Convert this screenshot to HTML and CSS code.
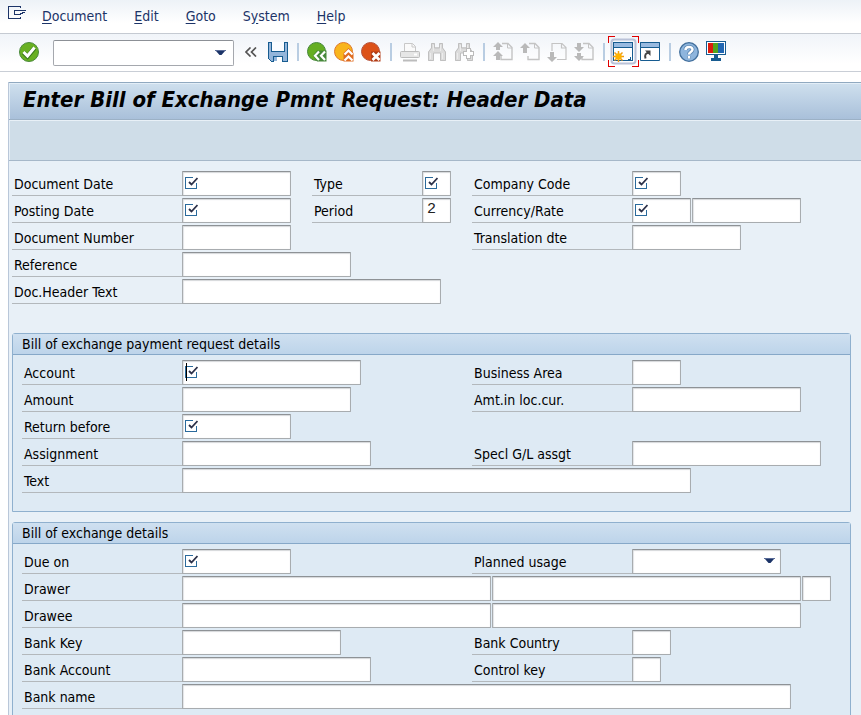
FILE: index.html
```html
<!DOCTYPE html>
<html lang="en">
<head>
<meta charset="utf-8">
<title>Enter Bill of Exchange Pmnt Request: Header Data</title>
<link rel="stylesheet" href="styles.css">
</head>
<body>
<svg class="sprite" aria-hidden="true">
  <symbol id="required" viewBox="0 0 13 12">
    <path d="M8 .5H.5v11h11V6" fill="none" stroke="#2a6a9c" shape-rendering="crispEdges"/>
    <path d="M4 5l2.500 2.500L12.500 1" fill="none" stroke="#2c3048" stroke-width="1.800"/>
  </symbol>
  <symbol id="arrow" viewBox="0 0 11 6">
    <path d="M0 .5h11" stroke="#5a6c98"/><path d="M1 1h9L6.500 5h-2z" fill="#1c3468"/>
  </symbol>
  <symbol id="page" viewBox="0 0 20 20">
    <path d="M9 1.500h6l4 4v12H8V14" fill="none" stroke="#c4c4c4" stroke-width="1.400"/>
    <path d="M14.500 1v5H19" fill="none" stroke="#c4c4c4"/>
  </symbol>
  <symbol id="binoculars" viewBox="0 0 20 20">
    <path d="M4 1h4v4h4V1h4v5l3 4v9h-6v-8H7v8H1v-9l3-4z" fill="#dcdcdc"/>
    <path d="M4.500 1.500h3V6h5V1.500h3V6l3 4v8.500h-5V11h-7v7.500h-5V10l3-4z" fill="none" stroke="#c0c0c0"/>
    <path d="M3.500 11v6M15.500 11v6M6.500 3v6M13.500 3v6" stroke="#ececec"/>
  </symbol>
</svg>

<nav class="menu">
  <button class="menu-icon" aria-label="Window menu">
    <svg width="18" height="13" viewBox="0 0 18 13" shape-rendering="crispEdges"><path d="M12.500 2V.5H.5v12h12V11M17.500 4.500H6.500v4h6v-1h2v-1h2v-1" fill="none" stroke="#1c3468"/></svg>
  </button>
  <a href="#"><u>D</u>ocument</a>
  <a href="#"><u>E</u>dit</a>
  <a href="#"><u>G</u>oto</a>
  <a href="#">S<u>y</u>stem</a>
  <a href="#"><u>H</u>elp</a>
</nav>

<header class="toolbar">
  <button class="tool enter" aria-label="Enter"><svg viewBox="0 0 20 20"><circle cx="10" cy="10" r="9.500" fill="#69b022" stroke="#4b8a3d"/><path d="M4.500 10.500l4 4L15.500 6" fill="none" stroke="#39781c" stroke-width="4.500"/><path d="M4.500 10l4 4L15.500 5.500" fill="none" stroke="#fff" stroke-width="3"/></svg></button>
  <div class="command">
    <input type="text" aria-label="Command">
    <button aria-label="Command history"><svg width="11" height="6"><use href="#arrow"/></svg></button>
  </div>
  <button class="collapse" aria-label="Collapse"><svg width="12" height="10" viewBox="0 0 12 10"><path d="M5.500 .5L1 5l4.500 4.500M11 .5L6.500 5 11 9.500" fill="none" stroke="#555" stroke-width="1.700"/></svg></button>
  <div class="tools">
    <button class="tool" aria-label="Save"><svg viewBox="0 0 20 20" shape-rendering="crispEdges"><path d="M.5 .5h19v19h-16l-3-3z" fill="#94b5da" stroke="#175c90"/><path d="M3.500 0v9.500h13V0" fill="#fafcff" stroke="#175c90"/><path d="M5.500 20v-5.500h9V20" fill="#fff" stroke="#175c90"/><path d="M6 15h3v4H6z" fill="#94b5da"/></svg></button>
    <span class="sep"></span>
    <button class="tool" aria-label="Back"><svg viewBox="0 0 20 20"><circle cx="9.500" cy="9.500" r="9" fill="#65ae22" stroke="#46883b"/><path d="M6 13.500l4-5h9.500v11H10z" fill="#46883b"/><path d="M12 9.500l-4 4.200 4 4.200M18 9.500l-4 4.200 4 4.200" fill="none" stroke="#fff" stroke-width="2.200"/></svg></button>
    <button class="tool" aria-label="Exit"><svg viewBox="0 0 20 20"><circle cx="9.500" cy="9.500" r="9" fill="#f9b51c" stroke="#df782b"/><path d="M14.500 6l5 5v8.500h-10V11z" fill="#df6c20"/><path d="M10.500 12.500l4-4 4 4M10.500 18.500l4-4 4 4" fill="none" stroke="#fff" stroke-width="2.200"/></svg></button>
    <button class="tool" aria-label="Cancel"><svg viewBox="0 0 20 20"><circle cx="9.500" cy="9.500" r="9" fill="#dc5118" stroke="#b5523b"/><path d="M10 9.500h9.500v10H10z" fill="#b23c16"/><path d="M11.500 11l7 7m0-7l-7 7" stroke="#fff" stroke-width="2.700"/></svg></button>
    <span class="sep"></span>
    <button class="tool" aria-label="Print"><svg viewBox="0 0 20 20"><path d="M4.500 10V1.500h8l3 3V10" fill="#fafafa" stroke="#c8c8c8"/><path d="M12 1.500V5h3.500" fill="none" stroke="#c8c8c8"/><rect x=".5" y="9.500" width="19" height="6" rx="1" fill="#e6e6e6" stroke="#bcbcbc"/><path d="M14 12.500h3" stroke="#fff" stroke-width="2"/><path d="M3 18.500h14" stroke="#bcbcbc" stroke-width="2"/></svg></button>
    <button class="tool" aria-label="Find"><svg><use href="#binoculars"/></svg></button>
    <button class="tool" aria-label="Find next"><svg viewBox="0 0 20 20"><use href="#binoculars"/><path d="M14.500 6v11M9 11.500h11" stroke="#bbb" stroke-width="5"/><path d="M14.500 7v9M10 11.500h9" stroke="#fff" stroke-width="3"/></svg></button>
    <span class="sep"></span>
    <button class="tool" aria-label="First page"><svg viewBox="0 0 20 20"><use href="#page"/><path d="M5 0l5 5H7v3H3V5H0zM5 9l5 5H7v4H3v-4H0z" fill="#b9b9b9"/></svg></button>
    <button class="tool" aria-label="Previous page"><svg viewBox="0 0 20 20"><use href="#page"/><path d="M5 1l5 5H7v5H3V6H0z" fill="#b9b9b9"/></svg></button>
    <button class="tool" aria-label="Next page"><svg viewBox="0 0 20 20"><path d="M5 9V1.500h10l4 4v12h-9M14.500 1.500v4.500H19" fill="none" stroke="#c4c4c4" stroke-width="1.200"/><path d="M5 20l5-5H7v-5H3v5H0z" fill="#b9b9b9"/></svg></button>
    <button class="tool" aria-label="Last page"><svg viewBox="0 0 20 20"><use href="#page"/><path d="M5 10l5-5H7V1H3v4H0zM5 19l5-5H7v-3H3v3H0z" fill="#b9b9b9"/></svg></button>
    <span class="sep"></span>
    <button class="tool focused" aria-label="New session"><svg viewBox="0 0 20 20" shape-rendering="crispEdges"><path d="M.5 .5h19v18H.5z" fill="#fff" stroke="#175c90"/><path d="M.5 .5h19v5H.5z" fill="#98bae0" stroke="#175c90"/><path d="M15 17h2v-2" fill="none" stroke="#175c90"/></svg>
      <svg class="spark" viewBox="0 0 11 11"><path d="M5.500 0v11M0 5.500h11M1.500 1.500l8 8M9.500 1.500l-8 8" stroke="#ef9a12" stroke-width="1.500"/><circle cx="5.500" cy="5.500" r="3.200" fill="#ffb300"/></svg>
      <svg class="focus-ring" viewBox="0 0 31 31"><rect x="3.500" y="3.500" width="24" height="24" rx="3" fill="none" stroke="#bac2d8" stroke-width="2"/><path d="M.5 7V.5H7M24 .5h6.500V7M30.500 24v6.500H24M7 30.500H.5V24" fill="none" stroke="#e00000" shape-rendering="crispEdges"/></svg></button>
    <button class="tool" aria-label="Create shortcut"><svg viewBox="0 0 20 20"><path d="M.5 .5h19v18H.5z" fill="#fff" stroke="#175c90"/><path d="M.5 .5h19v5H.5z" fill="#98bae0" stroke="#175c90"/><path d="M5.500 16.500c-1-4 0-5.500 4-6" fill="none" stroke="#444" stroke-width="2"/><path d="M5 8.500h5.500V14z" fill="#444"/></svg></button>
    <span class="sep"></span>
    <button class="tool" aria-label="Help"><svg viewBox="0 0 20 20"><circle cx="10" cy="10" r="9.300" fill="#8eb5dd" stroke="#426f9c" stroke-width="1.300"/><path d="M6.500 8C6.500 4 13.500 4 13.500 7.500c0 2.500-3.500 2.500-3.500 5M10 14v2.500" fill="none" stroke="#5a86b2" stroke-width="4"/><path d="M6.500 8C6.500 4 13.500 4 13.500 7.500c0 2.500-3.500 2.500-3.500 5M10 14v2.500" fill="none" stroke="#fff" stroke-width="2.500"/></svg></button>
    <button class="tool" aria-label="Customize layout"><svg viewBox="0 0 20 20" shape-rendering="crispEdges"><path d="M.5 -.5h19v13H.5z" fill="#fff" stroke="#175c90"/><path d="M2 1h5v10H2z" fill="#dc1c0c"/><path d="M7 1h5v10H7z" fill="#52a51d"/><path d="M12 1h6v10h-6z" fill="#2166b2"/><path d="M8 13h4v3H8zM5 16h10v3H5z" fill="#175c90"/></svg></button>
  </div>
</header>

<main class="window">
  <h1 class="title">Enter Bill of Exchange Pmnt Request: Header Data</h1>
  <div class="app-toolbar"></div>
  <form class="form">
    <section class="block header-data">
      <div class="row">
        <div class="cell"><label for="docdate">Document Date</label><span class="field w109"><input id="docdate"><svg class="req"><use href="#required"/></svg></span></div>
        <div class="cell"><label for="type">Type</label><span class="field w29"><input id="type"><svg class="req"><use href="#required"/></svg></span></div>
        <div class="cell"><label for="company">Company Code</label><span class="field w49"><input id="company"><svg class="req"><use href="#required"/></svg></span></div>
      </div>
      <div class="row">
        <div class="cell"><label for="posting">Posting Date</label><span class="field w109"><input id="posting"><svg class="req"><use href="#required"/></svg></span></div>
        <div class="cell"><label for="period">Period</label><span class="field w29"><input id="period" value="2"></span></div>
        <div class="cell"><label for="currency">Currency/Rate</label><span class="field w59"><input id="currency"><svg class="req"><use href="#required"/></svg></span><span class="field w109"><input aria-label="Rate"></span></div>
      </div>
      <div class="row">
        <div class="cell"><label for="docno">Document Number</label><span class="field w109"><input id="docno"></span></div>
        <div class="cell"></div>
        <div class="cell"><label for="translation">Translation dte</label><span class="field w109"><input id="translation"></span></div>
      </div>
      <div class="row">
        <div class="cell"><label for="reference">Reference</label><span class="field w169"><input id="reference"></span></div>
      </div>
      <div class="row">
        <div class="cell"><label for="headertext">Doc.Header Text</label><span class="field w259"><input id="headertext"></span></div>
      </div>
    </section>

    <section class="group">
      <h2>Bill of exchange payment request details</h2>
      <div class="block">
        <div class="row">
          <div class="cell"><label for="account">Account</label><span class="field w179 active"><input id="account"><svg class="req"><use href="#required"/></svg></span></div>
          <div class="cell"><label for="area">Business Area</label><span class="field w49"><input id="area"></span></div>
        </div>
        <div class="row">
          <div class="cell"><label for="amount">Amount</label><span class="field w169"><input id="amount"></span></div>
          <div class="cell"><label for="local">Amt.in loc.cur.</label><span class="field w169"><input id="local"></span></div>
        </div>
        <div class="row">
          <div class="cell"><label for="return">Return before</label><span class="field w109"><input id="return"><svg class="req"><use href="#required"/></svg></span></div>
        </div>
        <div class="row">
          <div class="cell"><label for="assignment">Assignment</label><span class="field w189"><input id="assignment"></span></div>
          <div class="cell"><label for="special">Specl G/L assgt</label><span class="field w189"><input id="special"></span></div>
        </div>
        <div class="row">
          <div class="cell"><label for="text">Text</label><span class="field w509"><input id="text"></span></div>
        </div>
      </div>
    </section>

    <section class="group">
      <h2>Bill of exchange details</h2>
      <div class="block">
        <div class="row">
          <div class="cell"><label for="due">Due on</label><span class="field w109"><input id="due"><svg class="req"><use href="#required"/></svg></span></div>
          <div class="cell"><label for="usage">Planned usage</label><span class="field w149"><select id="usage"><option></option></select><svg class="drop"><use href="#arrow"/></svg></span></div>
        </div>
        <div class="row">
          <div class="cell"><label for="drawer">Drawer</label><span class="field w309"><input id="drawer"></span><span class="field w309"><input aria-label="Drawer city"></span><span class="field w29"><input aria-label="Drawer region"></span></div>
        </div>
        <div class="row">
          <div class="cell"><label for="drawee">Drawee</label><span class="field w309"><input id="drawee"></span><span class="field w309"><input aria-label="Drawee city"></span></div>
        </div>
        <div class="row">
          <div class="cell"><label for="bankkey">Bank Key</label><span class="field w159"><input id="bankkey"></span></div>
          <div class="cell"><label for="country">Bank Country</label><span class="field w39"><input id="country"></span></div>
        </div>
        <div class="row">
          <div class="cell"><label for="bankaccount">Bank Account</label><span class="field w189"><input id="bankaccount"></span></div>
          <div class="cell"><label for="control">Control key</label><span class="field w29"><input id="control"></span></div>
        </div>
        <div class="row">
          <div class="cell"><label for="bankname">Bank name</label><span class="field w609"><input id="bankname"></span></div>
        </div>
      </div>
    </section>
  </form>
</main>
</body>
</html>
```
FILE: styles.css
```css
* { box-sizing: border-box; }

body {
  margin: 0;
  height: 100vh;
  overflow: hidden;
  background: #fff;
  color: #000;
  font: 14px/20px "DejaVu Sans Condensed", Tahoma, "Noto Sans", sans-serif;
}

button {
  padding: 0;
  border: 0;
  background: none;
  display: flex;
  align-items: center;
  justify-content: center;
}

.sprite { display: none; }

/* Menu bar */
.menu {
  display: flex;
  align-items: center;
  gap: 27px;
  height: 34px;
  padding: 0 8px 2px;
  background: linear-gradient(#edf2f7, #fff 70%);
  border-bottom: 1px solid #c5cad2;
}
.menu a { color: #1c3468; text-decoration: none; }
.menu u { text-underline-offset: 2px; }
.menu-icon { margin-right: -11px; padding-bottom: 6px; }

/* System toolbar */
.toolbar {
  display: flex;
  align-items: center;
  height: 38px;
  padding: 0 19px 2px;
  background: linear-gradient(#f0f4f9, #fff 80%);
  border-bottom: 1px solid #c9ced6;
}
.tools { display: flex; align-items: center; gap: 7px; }
.tool { position: relative; width: 20px; height: 20px; flex: none; }
.tool > svg { width: 20px; height: 20px; overflow: visible; }
.tool > .spark { position: absolute; left: 0; top: 9px; width: 11px; height: 11px; }
.tool > .focus-ring { position: absolute; left: -5px; top: -6px; width: 31px; height: 31px; }
.sep { width: 5px; height: 18px; background: linear-gradient(90deg, transparent 2px, #b9cde2 2px, #b9cde2 4px, transparent 4px); }
.command {
  display: flex;
  width: 181px;
  height: 26px;
  margin: 2px 0 0 14px;
  padding-right: 7px;
  background: #fff;
  border: 1px solid #a5a8ae;
  border-top-color: #8c9096;
  border-radius: 2px;
}
.command input { flex: 1; min-width: 0; border: 0; outline: 0; background: none; }
.collapse { margin: 0 11px; }

/* Transaction window */
.window {
  margin-left: 8px;
  border-left: 1px solid #b9c7d9;
  background: #e8f0f7;
}
.toolbar + .window { margin-top: 10px; }
.title {
  margin: 0;
  height: 38px;
  padding-left: 14px;
  border-top: 1px solid #90a9c0;
  border-bottom: 1px solid #9cb1c6;
  box-shadow: inset 1px 1px #e3eef7;
  background: linear-gradient(#cfe0ee, #a9c0da);
  font-size: 22px;
  line-height: 34px;
  font-style: italic;
  font-weight: bold;
  white-space: nowrap;
}
.app-toolbar {
  height: 41px;
  background: #cfdde8;
  border-bottom: 1px solid #a6b8c9;
  box-shadow: inset 1px 1px #e8f0f7;
}
.form { padding: 10px 10px 0 3px; }

/* Field rows */
.block { display: grid; gap: 2px; }
.row { display: grid; grid-template-columns: 450px 1fr; }
.cell { display: flex; gap: 1px; min-width: 0; }
label {
  flex: none;
  width: 161px;
  height: 25px;
  margin-right: -2px;
  padding-left: 2px;
  line-height: 27px;
  border-bottom: 1px solid #b3b8bc;
}
.header-data .row { grid-template-columns: 300px 160px 1fr; }
.header-data .cell:first-child label { width: 171px; }
.header-data .cell:nth-child(2) label { width: 111px; }
.field { position: relative; flex: none; height: 25px; }
.field input,
.field select {
  display: block;
  width: 100%;
  height: 25px;
  margin: 0;
  padding: 0 4px 2px;
  appearance: none;
  border: 1px solid #a8acaf;
  border-top-color: #8e9296;
  border-radius: 1px;
  outline: 0;
  background: #fff;
  box-shadow: inset 0 1px 1px #d5d8da, inset 1px 0 1px #e4e6e8;
  color: #222;
  font: 15px "Liberation Mono", monospace;
}
.req { position: absolute; left: 3px; top: 6px; width: 13px; height: 12px; pointer-events: none; }
.drop { position: absolute; right: 6px; top: 9px; width: 11px; height: 6px; pointer-events: none; }
.active::after { content: ""; position: absolute; left: 4px; top: 3px; width: 1px; height: 18px; background: #000; }

.w29 { width: 29px; }
.w39 { width: 39px; }
.w49 { width: 49px; }
.w59 { width: 59px; }
.w109 { width: 109px; }
.w149 { width: 149px; }
.w159 { width: 159px; }
.w169 { width: 169px; }
.w179 { width: 179px; }
.w189 { width: 189px; }
.w259 { width: 259px; }
.w309 { width: 309px; }
.w509 { width: 509px; }
.w609 { width: 609px; }

/* Group boxes */
.group {
  margin-bottom: 10px;
  border: 1px solid #8fb0ce;
  border-radius: 3px 3px 0 0;
  background: #deeaf4;
}
.header-data { margin-bottom: 29px; }
.group h2 {
  margin: 0;
  height: 21px;
  padding-left: 9px;
  border-bottom: 1px solid #86a8c8;
  background: linear-gradient(#cfe0f0, #bdd4ea);
  font-size: 14px;
  line-height: 20px;
  font-weight: normal;
}
.group .block { padding: 5px 0 18px 9px; }
```
